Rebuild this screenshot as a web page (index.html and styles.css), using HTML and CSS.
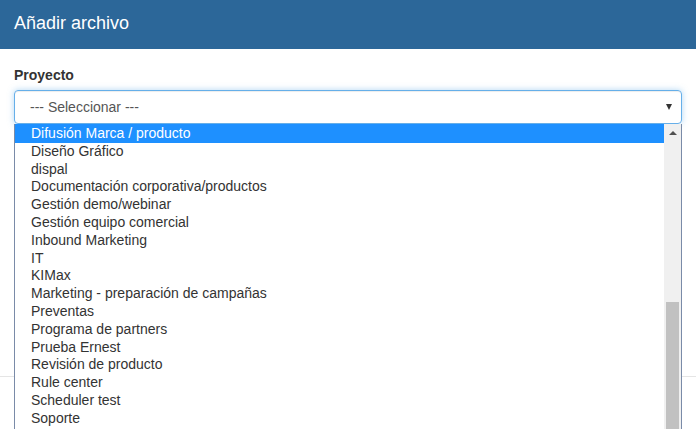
FILE: index.html
```html
<!DOCTYPE html>
<html lang="es">
<head>
<meta charset="utf-8">
<title>Añadir archivo</title>
<link rel="stylesheet" href="styles.css">
</head>
<body>
<div class="modal">
  <div class="modal-header">
    <h4 class="modal-title">Añadir archivo</h4>
  </div>
  <div class="modal-body">
    <label class="field-label">Proyecto</label>
    <div class="select">
      <span class="select-value">--- Seleccionar ---</span>
      <span class="select-arrow"></span>
    </div>
  </div>
  <div class="modal-footer"></div>

  <div class="listbox">
    <ul class="options">
      <li class="option selected">Difusión Marca / producto</li>
      <li class="option">Diseño Gráfico</li>
      <li class="option">dispal</li>
      <li class="option">Documentación corporativa/productos</li>
      <li class="option">Gestión demo/webinar</li>
      <li class="option">Gestión equipo comercial</li>
      <li class="option">Inbound Marketing</li>
      <li class="option">IT</li>
      <li class="option">KIMax</li>
      <li class="option">Marketing - preparación de campañas</li>
      <li class="option">Preventas</li>
      <li class="option">Programa de partners</li>
      <li class="option">Prueba Ernest</li>
      <li class="option">Revisión de producto</li>
      <li class="option">Rule center</li>
      <li class="option">Scheduler test</li>
      <li class="option">Soporte</li>
    </ul>
    <div class="scrollbar">
      <div class="scroll-up"><span class="tri-up"></span></div>
      <div class="scroll-track"><div class="scroll-thumb"></div></div>
    </div>
  </div>
</div>
</body>
</html>
```
FILE: styles.css
```css
html, body {
  margin: 0;
  padding: 0;
  background: #fff;
}
body {
  font-family: "Liberation Sans", Arial, Helvetica, sans-serif;
  font-size: 14px;
  color: #333;
  overflow: hidden;
}
.modal {
  position: relative;
  width: 696px;
  height: 429px;
  overflow: hidden;
}
.modal-header {
  height: 49px;
  box-sizing: border-box;
  padding: 13px 14px 0;
  background: #2c6799;
}
.modal-title {
  margin: 0;
  font-size: 18px;
  line-height: 20px;
  font-weight: normal;
  color: #fff;
}
.modal-body {
  height: 327px;
  box-sizing: border-box;
  padding: 16px 14px 0;
  display: flex;
  flex-direction: column;
}
.field-label {
  display: block;
  font-weight: bold;
  font-size: 14px;
  line-height: 20px;
  margin-bottom: 5px;
  color: #333;
}
.select {
  height: 34px;
  box-sizing: border-box;
  border: 1px solid #66afe9;
  border-radius: 4px;
  box-shadow: inset 0 1px 1px rgba(0,0,0,.075), 0 0 6px rgba(102,175,233,.5);
  padding: 6px 10px 6px 15px;
  display: flex;
  align-items: center;
  justify-content: space-between;
  line-height: 20px;
  color: #555;
}
.select-arrow {
  width: 0;
  height: 0;
  border-left: 3.5px solid transparent;
  border-right: 3.5px solid transparent;
  border-top: 6px solid #333;
  margin-right: -1px;
}
.modal-footer {
  border-top: 1px solid #e5e5e5;
  height: 52px;
}
.listbox {
  position: absolute;
  left: 14px;
  top: 124px;
  width: 668px;
  height: 305px;
  box-sizing: border-box;
  border-left: 1px solid #7a8ba8;
  border-right: 1px solid #7a8ba8;
  background: #fff;
  display: flex;
}
.options {
  list-style: none;
  margin: 0;
  padding: 0;
  flex: 1;
}
.option {
  height: 17.8px;
  line-height: 17.8px;
  padding-left: 16px;
  padding-top: 1px;
  margin-bottom: -1px;
  font-size: 14px;
  color: #333;
  white-space: nowrap;
}
.option.selected {
  background: #1e90ff;
  color: #fff;
}
.scrollbar {
  width: 17px;
  background: #f0f0f0;
  display: flex;
  flex-direction: column;
}
.scroll-up {
  height: 17px;
  display: flex;
  align-items: center;
  justify-content: center;
}
.tri-up {
  width: 0;
  height: 0;
  border-left: 4px solid transparent;
  border-right: 4px solid transparent;
  border-bottom: 4px solid #505050;
}
.scroll-track {
  flex: 1;
  padding: 161px 2px 0;
}
.scroll-thumb {
  height: 127px;
  background: #c1c1c1;
}
```
